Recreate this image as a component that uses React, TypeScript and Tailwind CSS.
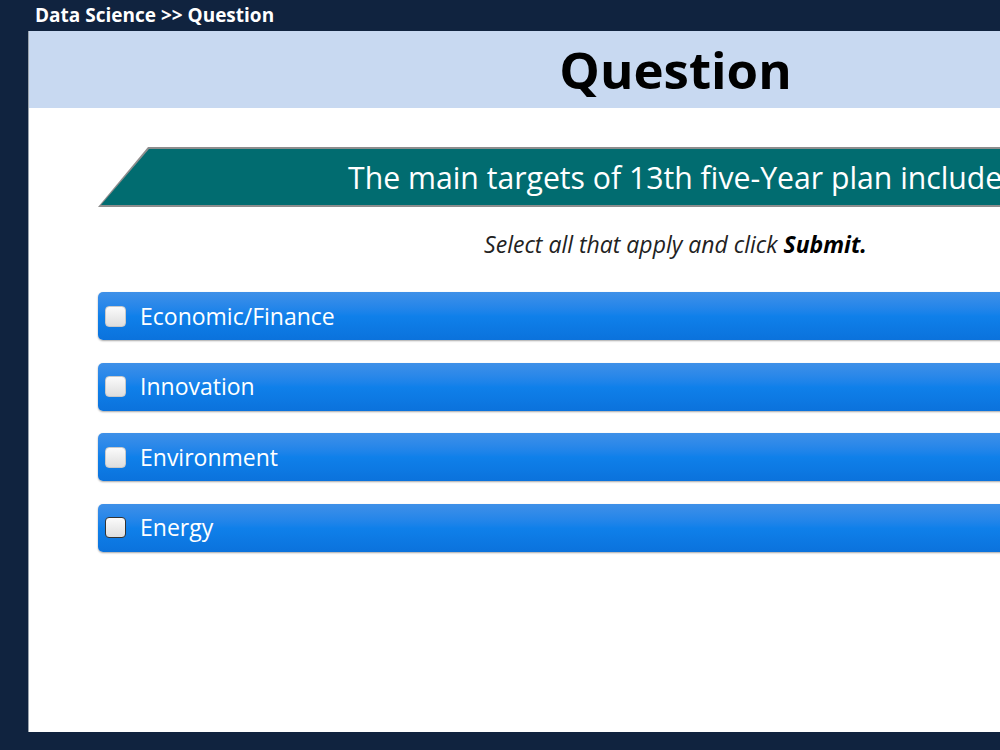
import React, { useState } from 'react';

const options = ['Economic/Finance', 'Innovation', 'Environment', 'Energy'];

function OptionRow({ label, active }: { label: string; active?: boolean }) {
  const [checked, setChecked] = useState(false);

  return (
    <label className="flex items-center h-[48px] rounded-[5px] bg-gradient-to-b from-[#3e90e8] via-[#0f80ea] to-[#0b72dc] shadow-[0_1px_2px_rgba(0,0,0,0.35)] cursor-pointer">
      <span
        onClick={() => setChecked(!checked)}
        className={`ml-[7px] w-[21px] h-[21px] rounded-[4px] bg-gradient-to-b from-[#fbfbfb] to-[#dedede] border ${
          active ? 'border-[#333]' : 'border-[#c9c9c9]'
        } flex items-center justify-center text-[#0b72dc] text-[14px] font-bold`}
      >
        {checked ? '✓' : ''}
      </span>
      <span className="ml-[14px] text-white text-[23px] leading-none">{label}</span>
    </label>
  );
}

export default function App() {
  return (
    <div className="w-[1000px] h-[750px] overflow-hidden bg-[#10233f] font-['Open_Sans','Noto_Sans',sans-serif]">
      {/* Breadcrumb */}
      <div className="h-[31px] pl-[35px] flex items-center text-white font-bold text-[19px]">
        Data Science &gt;&gt; Question
      </div>

      {/* Slide panel */}
      <div className="ml-[28px] w-[1294px] h-[701px] bg-white border-l border-[#9aa3ad]">
        <div className="h-[77px] bg-[#c8d9f1] flex items-center justify-center">
          <h1 className="text-black font-bold text-[51px] leading-none">Question</h1>
        </div>

        <div className="px-[69px]">
          {/* Question banner */}
          <div className="mt-[39px] h-[60px] bg-[#8d8d8d] [clip-path:polygon(50px_0,100%_0,100%_100%,0_100%)]">
            <div className="h-[56px] translate-y-[2px] bg-[#016c70] [clip-path:polygon(51px_0,100%_0,100%_100%,3px_100%)] flex items-center">
              <span className="text-white text-[30.2px] leading-none pl-[250px] pt-[3px] whitespace-nowrap">
                The main targets of 13th five-Year plan include
              </span>
            </div>
          </div>

          <p className="mt-[22px] text-center text-[#222] italic text-[23px] leading-[30px]">
            Select all that apply and click <b className="font-bold text-black">Submit.</b>
          </p>

          <div className="mt-[33px] flex flex-col gap-[22.6px]">
            {options.map((o, i) => (
              <OptionRow key={o} label={o} active={i === options.length - 1} />
            ))}
          </div>
        </div>
      </div>
    </div>
  );
}
